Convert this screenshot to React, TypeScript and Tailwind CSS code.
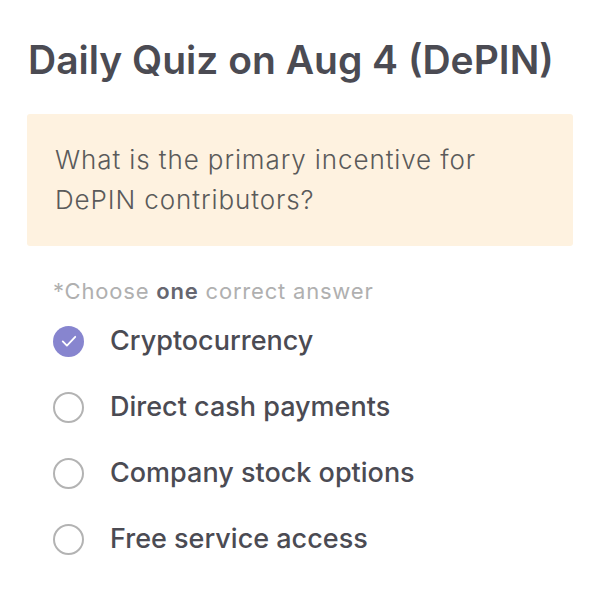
const OPTIONS = ['Cryptocurrency', 'Direct cash payments', 'Company stock options', 'Free service access']

export default function App() {
  const selected = 0

  return (
    <div
      className="w-[600px] h-[608px] bg-white px-[27px] pt-[36px]"
      style={{ fontFamily: 'Inter, "Noto Sans", sans-serif' }}
    >
      <h1 className="text-[39px] leading-[48px] font-semibold text-[#4b4b53] pl-[1px]">
        Daily Quiz on Aug 4 (DePIN)
      </h1>

      <div className="mt-[30px] rounded-[3px] bg-[#fef2e0] px-[28px] pt-[26px] pb-[26px]">
        <p className="text-[26px] leading-[40px] font-light tracking-[0.9px] text-[#5a5a5a]">
          What is the primary incentive for
          <br />
          DePIN contributors?
        </p>
      </div>

      <div className="mt-[30px] pl-[26px]">
        <p className="text-[22px] leading-[30px] tracking-[0.8px] text-[#b0b0b0]">
          *Choose <span className="font-semibold text-[#666670]">one</span> correct answer
        </p>

        <ul className="mt-[2px] flex flex-col">
          {OPTIONS.map((opt, i) => (
            <li key={opt} className="flex h-[66px] items-center gap-[26px]">
              {i === selected ? (
                <span className="grid h-[31px] w-[31px] place-items-center rounded-full bg-[#8785cf]">
                  <svg viewBox="0 0 24 24" className="h-[20px] w-[20px]" fill="none" stroke="white" strokeWidth="2.2" strokeLinecap="round" strokeLinejoin="round">
                    <path d="M4.5 12.5l5 5L19.5 7" />
                  </svg>
                </span>
              ) : (
                <span className="h-[31px] w-[31px] rounded-full border-2 border-[#b3b3b3]" />
              )}
              <span className="text-[27px] font-medium text-[#4b4b53]">{opt}</span>
            </li>
          ))}
        </ul>
      </div>
    </div>
  )
}
